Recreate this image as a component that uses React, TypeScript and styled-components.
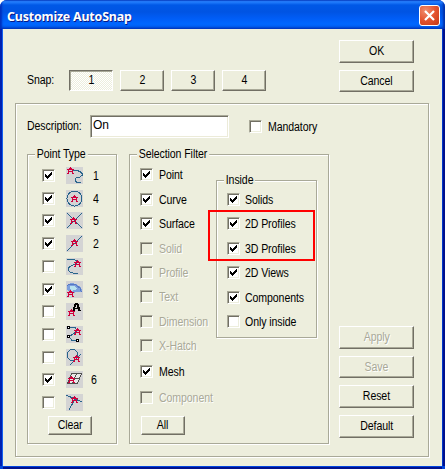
import React from "react";
import styled, { createGlobalStyle, css } from "styled-components";

const FACE = "#edeedd";
const SHADOW = "#a9a998";
const DARK = "#716f64";

const Global = createGlobalStyle`
  *, *::before, *::after { box-sizing: border-box; }
  html, body { margin: 0; padding: 0; background: #fff; }
  body { font-family: "Liberation Sans", Arial, sans-serif; font-size: 12px; line-height: 14px; color: #000; overflow: hidden; }
`;

const Window = styled.div`
  width: 445px;
  height: 469px;
  display: grid;
  grid-template-rows: 29px 1fr;
  border-radius: 7px 7px 0 0;
  overflow: hidden;
  background: #0046dd;
`;

const TitleBar = styled.header`
  display: flex;
  align-items: center;
  justify-content: space-between;
  padding: 2px 5px 0 7px;
  background: linear-gradient(#0a48c8 0, #2b86ff 1px, #1872f6 3px, #0058e6 5px, #0054e3 12px, #005cf5 18px, #0067ff 24px, #0060f5 26px, #0040c4 29px);
  box-shadow: inset 2px 0 2px #0030bd, inset -2px 0 2px #0030a8;
`;

const Title = styled.h1`
  margin: 0;
  font: bold 13px/16px "Noto Sans", "Open Sans", sans-serif;
  letter-spacing: -0.2px;
  transform: scaleX(0.955);
  transform-origin: 0 50%;
  color: #fff;
  text-shadow: 1px 1px 0 #0a1883;
  white-space: nowrap;
`;

const CloseButton = styled.button`
  width: 21px;
  height: 21px;
  padding: 0;
  border: 1px solid #fff;
  border-radius: 3px;
  background: radial-gradient(circle at 30% 25%, #f08d6e, #e4532f 50%, #c63814);
  svg { display: block; }
`;

const Client = styled.main`
  margin: 0 3px 3px;
  padding: 11px 12px 0;
  background: ${FACE};
  box-shadow: -1px 0 0 #1460ef, 1px 0 0 #0038c9, -3px 0 0 #0020b0, 3px 0 0 #00108c, 0 1px 0 #0045e0, 0 3px 0 #00108c;
`;

const TopArea = styled.div`
  display: flex;
  height: 63px;
  padding-left: 12px;
`;

const SnapRow = styled.div`
  display: flex;
  align-items: center;
  width: 312px;
  height: 21px;
  margin-top: 30px;
`;

const SnapButtons = styled.div`
  display: flex;
  gap: 7px;
`;

const Stack = styled.div<{ $gap: number }>`
  display: flex;
  flex-direction: column;
  gap: ${(p) => p.$gap}px;
`;

/* Condensed lettering, close to the proportions of MS Sans Serif. */
const condensed = css`
  letter-spacing: -0.1px;
  transform: scaleX(0.88);
  transform-origin: 0 50%;
  white-space: nowrap;
`;

const Text = styled.span<{ $disabled?: boolean }>`
  display: block;
  ${condensed}
  ${(p) => p.$disabled && css`color: ${SHADOW}; text-shadow: 1px 1px 0 #fff;`}
`;

const SnapLabel = styled(Text)`
  width: 42px;
  padding-bottom: 1px;
`;

const Button = styled.button<{ $w?: number; $h?: number; $pressed?: boolean }>`
  display: flex;
  align-items: center;
  justify-content: center;
  flex: none;
  width: ${(p) => p.$w ?? 75}px;
  height: ${(p) => p.$h ?? 23}px;
  padding: 0 0 1px;
  font: inherit;
  color: #000;
  border: 1px solid;
  border-color: #fff ${DARK} ${DARK} #fff;
  box-shadow: inset -1px -1px 0 ${SHADOW};
  background: ${FACE};
  ${Text} { transform-origin: 50% 50%; }
  ${(p) => p.$pressed && css`
    border-color: ${DARK} #fff #fff ${DARK};
    box-shadow: inset 1px 1px 0 ${SHADOW};
    background: repeating-conic-gradient(#fff 0 25%, ${FACE} 0 50%) 0 0 / 2px 2px;
  `}
`;

const Panel = styled.section`
  width: 414px;
  height: 354px;
  padding: 11px 10px 0 11px;
  border: 1px solid ${SHADOW};
  box-shadow: inset 1px 1px 0 #fff, 1px 1px 0 #fff;
`;

const DescriptionRow = styled.div`
  display: flex;
  align-items: center;
  height: 23px;
`;

const DescriptionLabel = styled(Text)`
  flex: none;
  width: 63px;
  padding-bottom: 2px;
`;

const Input = styled.input`
  width: 139px;
  height: 23px;
  margin-right: 20px;
  padding: 0 2px 3px;
  font: inherit;
  letter-spacing: -0.2px;
  color: #000;
  outline: 0;
  border: 1px solid;
  border-color: ${SHADOW} #fff #fff ${SHADOW};
  box-shadow: inset 1px 1px 0 ${DARK}, inset -1px -1px 0 #ecebd9;
`;

const Columns = styled.div`
  display: flex;
  align-items: flex-start;
  padding-top: 16px;
`;

const Group = styled.fieldset<{ $w: number; $h: number }>`
  position: relative;
  flex: none;
  width: ${(p) => p.$w}px;
  height: ${(p) => p.$h}px;
  min-width: 0;
  margin: 0;
  padding: 0;
  border: 1px solid ${SHADOW};
  box-shadow: inset 1px 1px 0 #fff, 1px 1px 0 #fff;
`;

/* Caption lies over the group's top edge. */
const Caption = styled.span`
  position: absolute;
  top: -8px;
  left: 7px;
  padding: 0 2px;
  ${condensed}
  background: ${FACE};
`;

const PointGroup = styled(Group)`
  margin-right: 12px;
`;

const PointRows = styled.div`
  padding: 12px 0 0 14px;
  height: 261px;
`;

const PointRow = styled.div`
  display: flex;
  align-items: flex-start;
  height: 22.72px;
  > svg { flex: none; margin-left: 11px; }
`;

const PointNumber = styled.span<{ $near?: boolean }>`
  margin: 2px 0 0 ${(p) => (p.$near ? 8 : 10)}px;
  ${condensed}
`;

const Box = styled.span<{ $disabled?: boolean; $top?: number }>`
  flex: none;
  width: 13px;
  height: 13px;
  margin-top: ${(p) => p.$top ?? 0}px;
  border: 1px solid;
  border-color: ${SHADOW} #fff #fff ${SHADOW};
  background: ${(p) => (p.$disabled ? FACE : "#fff")};
  box-shadow: inset 1px 1px 0 ${DARK}, inset -1px -1px 0 ${FACE};
  svg { display: block; }
`;

const CheckRow = styled.label<{ $h: number; $gap?: number }>`
  display: flex;
  align-items: flex-start;
  height: ${(p) => p.$h}px;
  gap: ${(p) => p.$gap ?? 6}px;
`;

const FilterBody = styled.div`
  display: flex;
  height: 261px;
  padding: 13px 0 0 10px;
`;

const FilterList = styled.div`
  width: 76px;
`;

const InsideGroup = styled(Group)`
  margin-top: 12px;
`;

const InsideList = styled.div`
  padding: 12px 0 0 10px;
`;

/* Red marker drawn over the two profile options. */
const Highlight = styled.div`
  position: absolute;
  left: -9px;
  top: 29px;
  width: 107px;
  height: 51px;
  border: 2px solid #f00;
`;

const SmallButton = styled(Button)<{ $left: number }>`
  margin-left: ${(p) => p.$left}px;
`;

const Actions = styled.div`
  display: grid;
  grid-template-rows: 23px 22px 23px 23px;
  row-gap: 7px;
  margin: 172px 0 0 10px;
`;

const Check = ({ on, disabled, top }: { on?: boolean; disabled?: boolean; top?: number }) => (
  <Box $disabled={disabled} $top={top}>
    {on && (
      <svg width="11" height="11" shapeRendering="crispEdges">
        <path d="M2 4h1v3h-1zM3 5h1v3h-1zM4 6h1v3h-1zM5 5h1v3h-1zM6 4h1v3h-1zM7 3h1v3h-1zM8 2h1v3h-1z" />
      </svg>
    )}
  </Box>
);

const Star = ({ x, y }: { x: number; y: number }) => (
  <path
    transform={`translate(${x} ${y})`}
    fill="#d0003c"
    stroke="none"
    d="M3 0h1v2h-1zM0 2h7v1h-7zM1 3h1v1h-1zM5 3h1v1h-1zM1 4h5v1h-5zM1 5h1v1h-1zM5 5h1v1h-1zM0 6h2v1h-2zM5 6h2v1h-2zM2 1h1v1h-1zM4 1h1v1h-1z"
  />
);

const icons: React.ReactNode[] = [
  <><path d="M6 3.5h5l3 1 2 2v2l-2 1.5h-3l-1.5 2v2l1.500 1.500h4" /><Star x={1} y={0} /></>,
  <><circle cx="8.500" cy="8.500" r="7.500" /><Star x={5} y={5} /></>,
  <><path d="M1 1l15 15M16 1L1 16" /><Star x={4} y={5} /></>,
  <><path d="M1 16L16 1" /><Star x={5} y={4} /></>,
  <><path d="M1 1.500h7l2 1v3l-6 3-2 2v2l3 2 4 1h3" /><Star x={8} y={2} /></>,
  <>
    <path d="M1 4l4-2 5 1 5 3 1.500 5h-3l-3 0-4 1-5-3z" fill="#7d9fdc" stroke="none" />
    <path d="M1 4.500l4-1.500 5 1 4 3 1.500 4" stroke="#5577c4" />
    <path d="M4 5h5l2 3-6 2z" fill="#b8e3ef" stroke="none" /><Star x={1} y={9} />
  </>,
  <><path d="M9 0h3l3 8h-2.500l-.5-2h-3l-.5 2h-2.500zM10.500 2l-1 2.500h2z" fill="#000" fillRule="evenodd" stroke="none" /><Star x={2} y={6} /></>,
  <>
    <path d="M3 1.500h6l2 3-3 3-5 3 3 4h5" />
    <path d="M1.500.500h2v2h-2zM1.500 9.500h2v2h-2zM10.500 13.500h2v2h-2z" fill="#fff" stroke="#000" />
    <Star x={8} y={2} />
  </>,
  <><circle cx="6.500" cy="6" r="5.500" /><path d="M4 16L15 5" /><Star x={7} y={6} /></>,
  <>
    <path d="M5.500 2.500h10l-4 10h-10zM3 7.500h11M10.500 2.500l-4 10" fill="#e9e9e9" stroke="#505050" />
    <Star x={2} y={5} />
  </>,
  <><path d="M0 1l16 7M9 5L3 16" /><Star x={5} y={2} /></>,
];

const points = [
  { on: true, n: "1" }, { on: true, n: "4" }, { on: true, n: "5" }, { on: true, n: "2" },
  { on: false, n: "" }, { on: true, n: "3" }, { on: false, n: "" }, { on: false, n: "" },
  { on: false, n: "" }, { on: true, n: "6" }, { on: false, n: "" },
];

type Option = { label: string; on?: boolean; disabled?: boolean; h?: number };

const filters: Option[] = [
  { label: "Point", on: true, h: 25 },
  { label: "Curve", on: true },
  { label: "Surface", on: true, h: 25 },
  { label: "Solid", disabled: true },
  { label: "Profile", disabled: true },
  { label: "Text", disabled: true, h: 25 },
  { label: "Dimension", disabled: true },
  { label: "X-Hatch", disabled: true, h: 26 },
  { label: "Mesh", on: true, h: 26 },
  { label: "Component", disabled: true },
];

const inside: Option[] = [
  { label: "Solids", on: true },
  { label: "2D Profiles", on: true, h: 25 },
  { label: "3D Profiles", on: true },
  { label: "2D Views", on: true, h: 25 },
  { label: "Components", on: true },
  { label: "Only inside" },
];

const Options = ({ items, gap }: { items: Option[]; gap?: number }) => (
  <>
    {items.map((o) => (
      <CheckRow key={o.label} $h={o.h ?? 24} $gap={gap}>
        <Check on={o.on} disabled={o.disabled} />
        <Text $disabled={o.disabled}>{o.label}</Text>
      </CheckRow>
    ))}
  </>
);

export default function App() {
  return (
    <>
      <Global />
      <Window>
        <TitleBar>
          <Title>Customize AutoSnap</Title>
          <CloseButton aria-label="Close">
            <svg width="19" height="19" stroke="#fff" strokeWidth="2.200"><path d="M5 5l9 9M14 5l-9 9" /></svg>
          </CloseButton>
        </TitleBar>
        <Client>
          <TopArea>
            <SnapRow>
              <SnapLabel>Snap:</SnapLabel>
              <SnapButtons>
                {["1", "2", "3", "4"].map((n) => (
                  <Button key={n} $w={44} $h={21} $pressed={n === "1"}><Text>{n}</Text></Button>
                ))}
              </SnapButtons>
            </SnapRow>
            <Stack $gap={7}>
              <Button><Text>OK</Text></Button>
              <Button $h={22}><Text>Cancel</Text></Button>
            </Stack>
          </TopArea>
          <Panel>
            <DescriptionRow>
              <DescriptionLabel>Description:</DescriptionLabel>
              <Input defaultValue="On" aria-label="Description" />
              <CheckRow $h={13}>
                <Check /><Text>Mandatory</Text>
              </CheckRow>
            </DescriptionRow>
            <Columns>
              <PointGroup $w={90} $h={290}>
                <Caption>Point Type</Caption>
                <PointRows>
                  {points.map((p, i) => (
                    <PointRow key={i}>
                      <Check on={p.on} top={2} />
                      <svg width="17" height="17" fill="none" stroke="#27648b" shapeRendering="crispEdges">
                        <rect width="17" height="17" fill="#d4d4d4" stroke="none" />
                        {icons[i]}
                      </svg>
                      <PointNumber $near={p.n === "6"}>{p.n}</PointNumber>
                    </PointRow>
                  ))}
                </PointRows>
                <SmallButton $w={44} $h={19} $left={20}><Text>Clear</Text></SmallButton>
              </PointGroup>
              <Group $w={200} $h={290}>
                <Caption>Selection Filter</Caption>
                <FilterBody>
                  <FilterList><Options items={filters} /></FilterList>
                  <InsideGroup $w={101} $h={158}>
                    <Caption>Inside</Caption>
                    <InsideList><Options items={inside} gap={5} /></InsideList>
                    <Highlight />
                  </InsideGroup>
                </FilterBody>
                <SmallButton $w={44} $h={19} $left={11}><Text>All</Text></SmallButton>
              </Group>
              <Actions>
                <Button disabled><Text $disabled>Apply</Text></Button>
                <Button disabled $h={22}><Text $disabled>Save</Text></Button>
                <Button><Text>Reset</Text></Button>
                <Button><Text>Default</Text></Button>
              </Actions>
            </Columns>
          </Panel>
        </Client>
      </Window>
    </>
  );
}
